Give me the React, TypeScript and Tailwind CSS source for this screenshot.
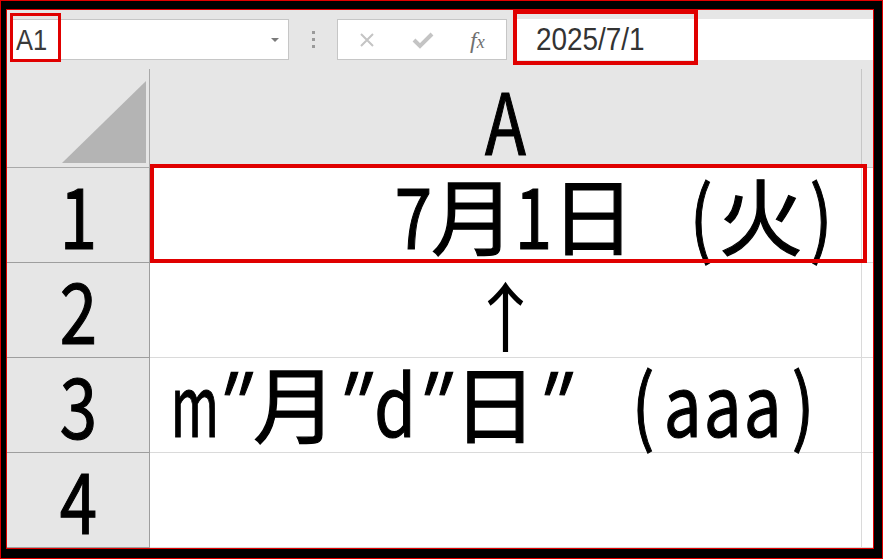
const cjk = "font-['Noto_Sans_CJK_JP',sans-serif]";

// MS Gothic style: half-width cells for latin, full-width cells for kana/kanji
function Mono({ text }: { text: string }) {
  return (
    <span className={`${cjk} inline-flex text-[84px] leading-none whitespace-nowrap [-webkit-text-stroke:1.2px_black]`}>
      {[...text].map((ch, i) => {
        const wide = ch.charCodeAt(0) >= 0x3000;
        let cell = wide ? "w-[80px]" : "w-[40px]";
        if (ch === " ") cell = "w-[48px]";
        let glyph = ch === "m" ? "scale-x-[0.62]" : "scale-x-[0.8]";
        if (wide) glyph = "";
        if (ch === "″") glyph = "scale-x-[0.9] -skew-x-12";
        return (
          <span key={i} className={`${cell} flex justify-center`}>
            <span className={`inline-block ${glyph}`}>{ch === " " ? "\u00a0" : ch}</span>
          </span>
        );
      })}
    </span>
  );
}

function RowHead({ n }: { n: string }) {
  return (
    <div className="w-[143px] shrink-0 flex items-end justify-center pb-[7px] border-r border-b border-[#9e9e9e] bg-[#e6e6e6]">
      <Mono text={n} />
    </div>
  );
}

function Cells({ children }: { children?: React.ReactNode }) {
  return (
    <div className="h-[95px] shrink-0 flex">
      {children}
      <div className="flex-1 bg-white border-b border-[#dadada]" />
    </div>
  );
}

export default function App() {
  return (
    <div className="w-[883px] h-[559px] bg-black border border-[#e00000] pl-[5px] pt-[8px] pr-[8px] pb-[9px]">
      <div className="h-full border border-[#e00000] bg-[#e6e6e6] flex flex-col overflow-hidden text-black">
        {/* formula bar */}
        <div className="h-[59px] shrink-0 flex items-start pt-[9px] pl-[3px]">
          <div className="relative w-[279px] h-[41px] bg-white border border-[#c6c6c6] flex items-center justify-between pl-[5px] pr-[8px]">
            <span className="font-['Liberation_Sans',sans-serif] text-[30px] text-[#3a3a3a] leading-none inline-block scale-x-[0.85] origin-left">A1</span>
            <svg width="10" height="6" viewBox="0 0 10 6">
              <path d="M1 1h8L5 5z" fill="#7a7a7a" />
            </svg>
            <div className="absolute left-[-1px] top-[-7px] w-[51px] h-[49px] border-[3px] border-[#e00000]" />
          </div>
          <div className="w-[48px] h-[41px] flex flex-col items-center justify-center gap-[4px]">
            <span className="w-[3px] h-[3px] bg-[#9a9a9a]" />
            <span className="w-[3px] h-[3px] bg-[#9a9a9a]" />
            <span className="w-[3px] h-[3px] bg-[#9a9a9a]" />
          </div>
          <div className="w-[170px] h-[41px] bg-white border border-[#c6c6c6] flex items-center pl-[20px]">
            <svg width="18" height="18" viewBox="0 0 18 18">
              <path d="M3 3l12 12M15 3L3 15" stroke="#c4c4c4" strokeWidth="2" fill="none" />
            </svg>
            <svg className="ml-[36px]" width="22" height="18" viewBox="0 0 22 18">
              <path d="M2 9l6 6L20 3" stroke="#c4c4c4" strokeWidth="4" fill="none" />
            </svg>
            <span className="ml-[36px] font-['Liberation_Serif',serif] italic text-[#707070] text-[24px] leading-none">
              f<span className="text-[18px]">x</span>
            </span>
          </div>
          <div className="relative ml-[6px] flex-1 h-[41px] bg-white flex items-center pl-[23px]">
            <span className="font-['Liberation_Sans',sans-serif] text-[31px] text-[#333] leading-none inline-block scale-x-[0.9] origin-left">2025/7/1</span>
            <div className="absolute left-0 top-[-9px] w-[185px] h-[55px] border-[4px] border-[#e00000]" />
          </div>
        </div>

        {/* column header */}
        <div className="h-[99px] shrink-0 flex">
          <div className="w-[143px] shrink-0 flex items-end justify-end pr-[3px] pb-[4px] border-r border-b border-[#a9a9a9]">
            <svg width="84" height="82" viewBox="0 0 84 82">
              <path d="M0 82L84 0V82z" fill="#b4b4b4" />
            </svg>
          </div>
          <div className="w-[712px] shrink-0 flex items-end justify-center pb-[6px] border-r border-b border-[#c6c6c6]">
            <Mono text="A" />
          </div>
          <div className="flex-1 border-b border-[#c6c6c6]" />
        </div>

        <Cells>
          <RowHead n="1" />
          <div className="relative w-[712px] shrink-0 bg-white border-r border-b border-[#dadada] flex items-end justify-end pb-[7px] pr-[20px]">
            <Mono text="7月1日 (火)" />
            <div className="absolute left-0 top-[-4px] w-[717px] h-[99px] border-[4px] border-[#e00000]" />
          </div>
        </Cells>

        <Cells>
          <RowHead n="2" />
          <div className="w-[712px] shrink-0 bg-white border-r border-b border-[#dadada] flex items-end justify-center pb-[6px]">
            <span className={`${cjk} text-[76px] leading-none`}>↑</span>
          </div>
        </Cells>

        <Cells>
          <RowHead n="3" />
          <div className="w-[712px] shrink-0 bg-white border-r border-b border-[#dadada] flex items-end pb-[9px] pl-[25px]">
            <Mono text="m″月″d″日″ (aaa)" />
          </div>
        </Cells>

        <Cells>
          <RowHead n="4" />
          <div className="w-[712px] shrink-0 bg-white border-r border-b border-[#dadada]" />
        </Cells>
      </div>
    </div>
  );
}
